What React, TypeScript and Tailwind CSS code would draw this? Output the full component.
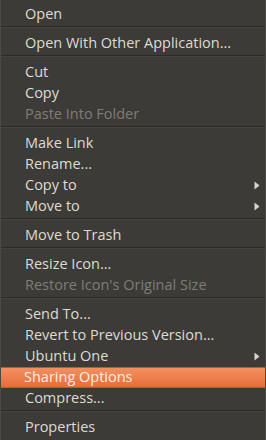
type Item = { label: string; disabled?: boolean; sub?: boolean; active?: boolean } | "sep";

const items: Item[] = [
  { label: "Open" },
  "sep",
  { label: "Open With Other Application..." },
  "sep",
  { label: "Cut" },
  { label: "Copy" },
  { label: "Paste Into Folder", disabled: true },
  "sep",
  { label: "Make Link" },
  { label: "Rename..." },
  { label: "Copy to", sub: true },
  { label: "Move to", sub: true },
  "sep",
  { label: "Move to Trash" },
  "sep",
  { label: "Resize Icon..." },
  { label: "Restore Icon's Original Size", disabled: true },
  "sep",
  { label: "Send To..." },
  { label: "Revert to Previous Version..." },
  { label: "Ubuntu One", sub: true },
  { label: "Sharing Options", active: true },
  { label: "Compress..." },
  "sep",
  { label: "Properties" },
];

function Arrow() {
  return (
    <svg width="6" height="9" viewBox="0 0 6 9" className="absolute right-[5px] top-[6px]">
      <path d="M0.5 0.5 L5.5 4.5 L0.5 8.5 Z" fill="#d8d4cc" />
    </svg>
  );
}

export default function App() {
  return (
    <div
      className="w-[266px] h-[440px] bg-[#3c3b37] border-x border-[#4a4944] pt-1 overflow-hidden"
      style={{ fontFamily: '"Open Sans", "Noto Sans", sans-serif' }}
    >
      {items.map((it, i) =>
        it === "sep" ? (
          <div key={i} className="h-2 pt-[1px]">
            <div className="h-px bg-[#2c2b28]" />
            <div className="h-px bg-[#45443f]" />
          </div>
        ) : (
          <div
            key={i}
            className={
              it.active
                ? "relative h-[21px] leading-[18px] pl-[23px] text-[14.5px] text-[#fbeee6] border border-[#c05a2c] bg-gradient-to-b from-[#f39060] to-[#e86c3a] -mx-px"
                : it.disabled
                ? "relative h-[21px] leading-[19px] pl-6 text-[14.5px] text-[#7f7d77]"
                : "relative h-[21px] leading-[19px] pl-6 text-[14.5px] text-[#dfdbd2]"
            }
          >
            <span>{it.label}</span>
            {it.sub && <Arrow />}
          </div>
        )
      )}
    </div>
  );
}
